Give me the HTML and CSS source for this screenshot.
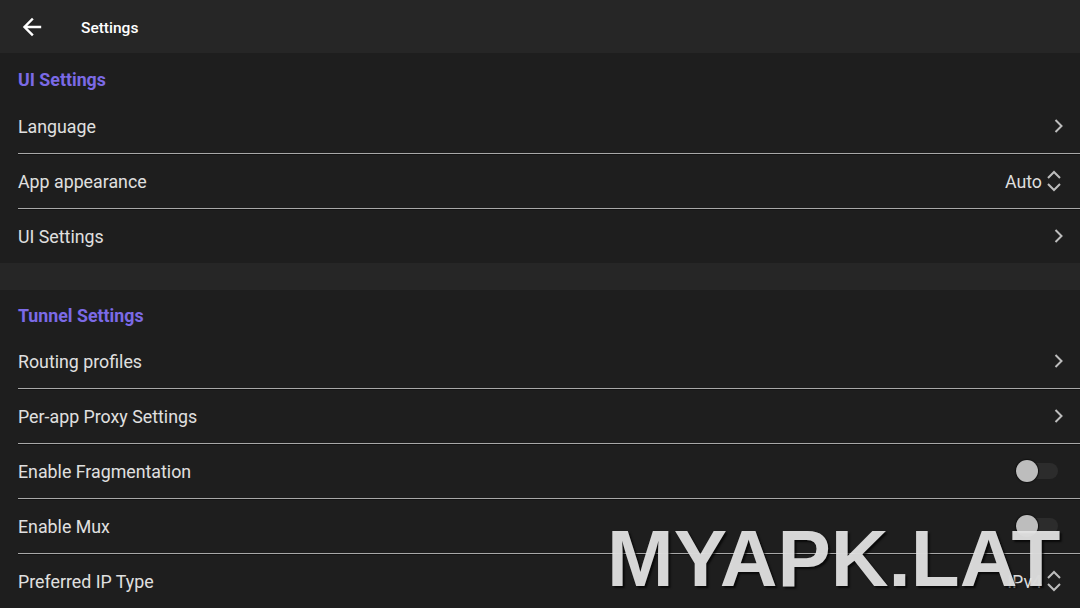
FILE: index.html
```html
<!DOCTYPE html>
<html lang="en">
<head>
<meta charset="utf-8">
<title>Settings</title>
<link rel="stylesheet" href="styles.css">
</head>
<body>
<div class="screen">
  <header class="topbar">
    <button class="back" aria-label="Back">
      <svg width="20" height="20" viewBox="0 0 20 20"><path d="M18 10H3M10 2.5L2.5 10 10 17.5" fill="none" stroke="#fff" stroke-width="2.4" stroke-linecap="square"/></svg>
    </button>
    <h1 class="title">Settings</h1>
  </header>

  <section class="group">
    <h2 class="group-title">UI Settings</h2>
    <div class="row"><span class="label">Language</span><span class="chev"><svg width="10" height="16" viewBox="0 0 10 16"><path d="M2.5 2l6 6-6 6" fill="none" stroke="#bdbdbd" stroke-width="2"/></svg></span></div>
    <div class="row"><span class="label">App appearance</span><span class="value">Auto<svg width="16" height="24" viewBox="0 0 16 24"><path d="M2 9l6-6 6 6M2 15l6 6 6-6" fill="none" stroke="#bdbdbd" stroke-width="2"/></svg></span></div>
    <div class="row"><span class="label">UI Settings</span><span class="chev"><svg width="10" height="16" viewBox="0 0 10 16"><path d="M2.5 2l6 6-6 6" fill="none" stroke="#bdbdbd" stroke-width="2"/></svg></span></div>
  </section>

  <div class="spacer"></div>

  <section class="group">
    <h2 class="group-title group-title--tight">Tunnel Settings</h2>
    <div class="row"><span class="label">Routing profiles</span><span class="chev"><svg width="10" height="16" viewBox="0 0 10 16"><path d="M2.5 2l6 6-6 6" fill="none" stroke="#bdbdbd" stroke-width="2"/></svg></span></div>
    <div class="row"><span class="label">Per-app Proxy Settings</span><span class="chev"><svg width="10" height="16" viewBox="0 0 10 16"><path d="M2.5 2l6 6-6 6" fill="none" stroke="#bdbdbd" stroke-width="2"/></svg></span></div>
    <div class="row"><span class="label">Enable Fragmentation</span><span class="switch"><span class="thumb"></span></span></div>
    <div class="row"><span class="label">Enable Mux</span><span class="switch"><span class="thumb"></span></span></div>
    <div class="row"><span class="label">Preferred IP Type</span><span class="value">IPv4<svg width="16" height="24" viewBox="0 0 16 24"><path d="M2 9l6-6 6 6M2 15l6 6 6-6" fill="none" stroke="#bdbdbd" stroke-width="2"/></svg></span></div>
  </section>

  <div class="watermark">MYAPK.LAT</div>
</div>
</body>
</html>
```

FILE: styles.css
```css
* { box-sizing: border-box; }

html, body {
  margin: 0;
  padding: 0;
  background: #1e1e1e;
}

body {
  font-family: Roboto, "Noto Sans", sans-serif;
  color: #e2e2e2;
}

.screen {
  position: relative;
  width: 1080px;
  height: 608px;
  overflow: hidden;
  background: #1e1e1e;
}

.topbar {
  height: 53px;
  background: #262626;
  display: flex;
  align-items: center;
  padding-left: 22px;
}

.back {
  width: 20px;
  height: 20px;
  padding: 0;
  border: 0;
  background: none;
  display: flex;
  margin-top: 1px;
}

.title {
  margin: 0 0 0 39px;
  padding-top: 2px;
  font-size: 15.5px;
  font-weight: 500;
  color: #fff;
}

.group {
  display: flex;
  flex-direction: column;
}

.group-title {
  margin: 0;
  height: 45px;
  padding: 16px 0 0 18px;
  font-size: 17.8px;
  line-height: 22px;
  font-weight: 700;
  color: #7b6ae6;
}

.group-title--tight {
  height: 43px;
  padding-top: 15px;
}

.row {
  height: 55px;
  margin-left: 18px;
  padding-right: 18px;
  display: flex;
  align-items: center;
  justify-content: space-between;
  font-size: 17.8px;
  color: #e0e0e0;
}

.row + .row {
  border-top: 1px solid #a8a8a8;
  box-shadow: inset 0 1px 0 #111;
}

.row .label { padding-top: 1px; }

.chev {
  display: flex;
  margin-right: -1px;
}

.value {
  display: flex;
  align-items: center;
  gap: 4px;
  font-size: 17.8px;
  color: #dedede;
}

.switch {
  position: relative;
  width: 41px;
  height: 16px;
  border-radius: 8px;
  background: #2c2c2c;
  margin-right: 4px;
}

.switch .thumb {
  position: absolute;
  left: -1px;
  top: -3px;
  width: 22px;
  height: 22px;
  border-radius: 50%;
  background: #bdbdbd;
  box-shadow: 0 0 1px 1px #111;
}

.spacer {
  height: 27px;
  background: #262626;
}

.watermark {
  position: absolute;
  left: 607px;
  top: 519px;
  font-family: "Liberation Sans", Arial, sans-serif;
  font-weight: 700;
  font-size: 80px;
  line-height: 1;
  color: rgba(230, 230, 230, 0.93);
  text-shadow: 2px 2px 2px rgba(0, 0, 0, 0.7);
  pointer-events: none;
}
```
